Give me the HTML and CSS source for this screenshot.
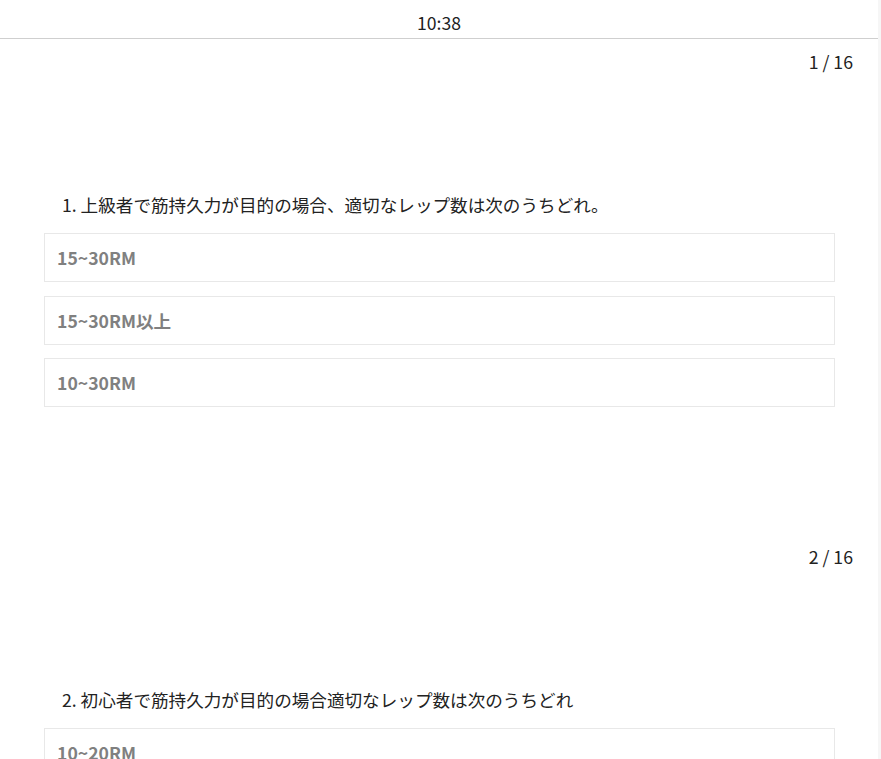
FILE: index.html
```html
<!DOCTYPE html>
<html lang="ja">
<head>
  <meta charset="UTF-8">
  <title>クイズ</title>
  <meta name="viewport" content="width=device-width, initial-scale=1.0">
  <link rel="stylesheet" href="styles.css">
</head>
<body>
  <div class="page">
    <div class="topbar">10:38</div>

    <div class="quiz">
      <div class="counter">1 / 16</div>
      <div class="question">1. 上級者で筋持久力が目的の場合、適切なレップ数は次のうちどれ。</div>
      <ul class="options">
        <li>15~30RM</li>
        <li>15~30RM以上</li>
        <li>10~30RM</li>
      </ul>
    </div>

    <div class="quiz">
      <div class="counter">2 / 16</div>
      <div class="question">2. 初心者で筋持久力が目的の場合適切なレップ数は次のうちどれ</div>
      <ul class="options">
        <li>10~20RM</li>
        <li>15~30RM</li>
        <li>20~30RM</li>
      </ul>
    </div>
  </div>
</body>
</html>
```

FILE: styles.css
```css
body { margin:0; padding:0; background:#f6f6f6; font-family: "Noto Sans CJK JP", "Noto Sans", sans-serif; color:#222; overflow:hidden; }
.page { width:878px; background:#fff; min-height:100vh; }
.topbar { height:39px; border-bottom:1px solid #cfcfcf; display:flex; align-items:center; justify-content:center; font-size:17.6px; padding-top:6px; box-sizing:border-box; }
.quiz { padding:10px 43px 127px 44px; }
.counter { text-align:right; font-size:17.7px; line-height:24px; margin-right:-18px; }
.question { font-size:17.6px; line-height:24px; margin:120px 0 16px 18px; }
.options { list-style:none; margin:0; padding:0; display:flex; flex-direction:column; gap:13.5px; }
.options li { height:49px; box-sizing:border-box; border:1px solid #e8e8e8; padding:0 12px; display:flex; align-items:center; font-size:17.6px; font-weight:bold; color:#808080; }
```
